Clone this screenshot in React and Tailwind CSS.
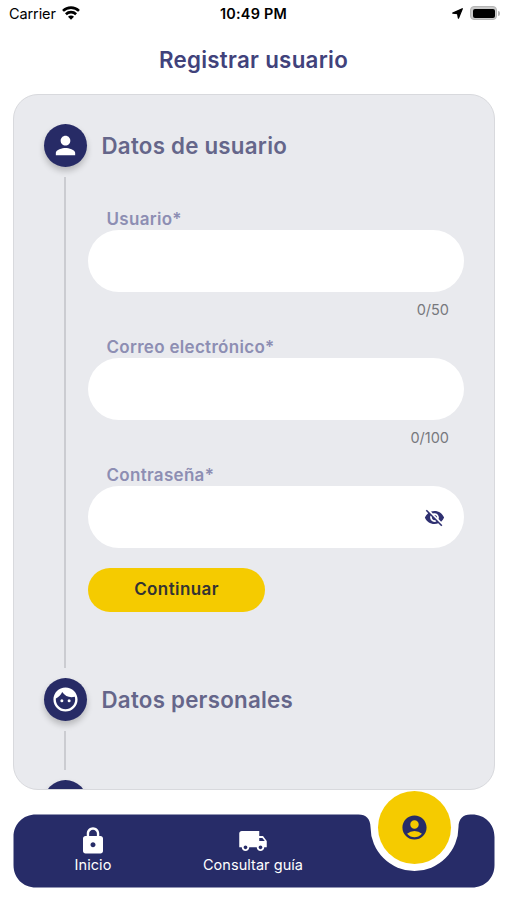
import React from "react";
import {
  MdPerson,
  MdFace,
  MdLock,
  MdLocalShipping,
  MdAccountCircle,
  MdVisibilityOff,
} from "react-icons/md";

function StatusBar() {
  return (
    <header className="grid h-7 grid-cols-3 items-center pl-[9px] pr-[7px] text-black">
      <div className="flex items-center gap-[6px]">
        <span className="text-[14.5px] leading-7 tracking-[-0.1px]">Carrier</span>
        <svg viewBox="0 0 18 14" className="mb-[2px] h-[14px] w-[18px]" fill="none" stroke="currentColor" strokeWidth="2.6">
          <path d="M1 4.9a11.5 11.5 0 0 1 16 0" />
          <path d="M3.9 8.2a7.3 7.3 0 0 1 10.2 0" />
          <path d="M9 13.7 6 10.7a4.2 4.2 0 0 1 6 0z" fill="currentColor" stroke="none" />
        </svg>
      </div>
      <span className="-ml-[2px] text-center text-[14.4px] font-semibold leading-7 tracking-[0.25px]">10:49 PM</span>
      <div className="flex items-center justify-end gap-[7px] pb-[2px]">
        <svg viewBox="0 0 12 12" className="h-[11px] w-[11px]" fill="currentColor">
          <path d="M11.2.8 7 11.1 6.100 6.200 .8 5.500z" stroke="currentColor" strokeWidth="1.4" strokeLinejoin="round" />
        </svg>
        <div className="flex items-center gap-px">
          <div className="h-[14px] w-[27px] rounded-[4px] border border-[#b5b5b5] bg-[#c9c9c9] p-[1.5px]">
            <div className="h-full w-full rounded-[2px] bg-black" />
          </div>
          <div className="h-[5px] w-[2px] rounded-r-full bg-[#b5b5b5]" />
        </div>
      </div>
    </header>
  );
}

function StepBadge({ children }) {
  return (
    <div className="flex h-[43px] w-[43px] shrink-0 items-center justify-center rounded-full bg-[#272b66] text-white shadow-[0_4px_6px_rgba(0,0,0,0.22)]">
      {children}
    </div>
  );
}

function StepTitle({ children }) {
  return <h2 className="text-[22.3px] font-semibold leading-[43px] tracking-[0.25px] text-[#65668a]">{children}</h2>;
}

function Field({ label, counter, children }) {
  return (
    <div className="flex flex-col">
      <label className="pl-[18.5px] pt-px text-[17px] font-semibold leading-[21px] tracking-[0.3px] text-[#8d8eb3]">{label}</label>
      <div className="flex h-[62px] items-center justify-end rounded-full bg-white pr-[19px] text-[#2f3071]">{children}</div>
      {counter && <span className="mt-[7px] pr-[15px] text-right text-[14.5px] leading-[21px] text-[#77787d]">{counter}</span>}
    </div>
  );
}

function NavItem({ icon, label }) {
  return (
    <div className="flex w-[160px] flex-col items-center pt-[12px] text-white">
      {icon}
      <span className="text-[14.5px] leading-[18px] tracking-[0.05px]">{label}</span>
    </div>
  );
}

export default function App() {
  return (
    <div className="flex h-[900px] w-[507px] flex-col overflow-hidden bg-white font-['Inter','Noto_Sans',sans-serif]">
      <StatusBar />
      <h1 className="h-[66px] text-center text-[22.3px] font-semibold leading-[64px] tracking-[0.3px] text-[#41427b]">Registrar usuario</h1>

      <main className="ml-[13px] mr-[12px] flex h-[696px] shrink-0 flex-col overflow-hidden rounded-[25px] border border-[#d8d9dd] bg-[#e9eaee] pl-[29.5px] pr-[30px] pt-[29px]">
        <div className="flex h-[43px] shrink-0 gap-[15px]">
          <StepBadge><MdPerson size={29} /></StepBadge>
          <StepTitle>Datos de usuario</StepTitle>
        </div>
        <div className="mt-[10px] flex h-[491px] shrink-0">
          <div className="ml-[20.5px] w-[2px] bg-[#cbccd1]" />
          <div className="ml-[22px] flex flex-1 flex-col pt-[30.5px]">
            <div className="flex flex-col gap-[16.25px]">
              <Field label="Usuario*" counter="0/50" />
              <Field label="Correo electrónico*" counter="0/100" />
              <Field label="Contraseña*"><MdVisibilityOff size={21} /></Field>
            </div>
            <button className="mt-[19.5px] h-[44px] w-[177px] rounded-full bg-[#f5cb00] pt-px text-[17px] font-semibold tracking-[0.4px] text-[#333333]">Continuar</button>
          </div>
        </div>
        <div className="mt-[10px] flex h-[43px] shrink-0 gap-[15px]">
          <StepBadge><MdFace size={29} /></StepBadge>
          <StepTitle>Datos personales</StepTitle>
        </div>
        <div className="ml-[20.5px] mt-[10px] h-[39px] w-[2px] shrink-0 bg-[#cbccd1]" />
        <div className="mt-[9.5px]"><StepBadge /></div>
      </main>

      <nav className="relative ml-[13px] mr-[12px] mt-[24px] flex h-[74px] shrink-0">
        <svg viewBox="0 0 482 74" className="absolute inset-0 h-[74px] w-[482px]" fill="#272c68">
          <path d="M22 .5H345.500C353 .5 357.500 5 357.500 13A44 44 0 0 0 445.500 13C445.500 5 450 .5 457.500 .5H459C472 .5 481.500 10 481.500 23V51C481.500 64 472 73.500 459 73.500H23C10 73.500 .5 64 .5 51V23C.5 10 10 .5 23 .5Z" />
        </svg>
        <div className="relative flex">
          <NavItem label="Inicio" icon={<MdLock size={30} />} />
          <NavItem label="Consultar guía" icon={<MdLocalShipping size={30} />} />
        </div>
        <div className="absolute -top-[23px] left-[365px] flex h-[73px] w-[73px] items-center justify-center rounded-full bg-[#f5cb00] text-[#272c68]">
          <MdAccountCircle size={29} />
        </div>
      </nav>
    </div>
  );
}
